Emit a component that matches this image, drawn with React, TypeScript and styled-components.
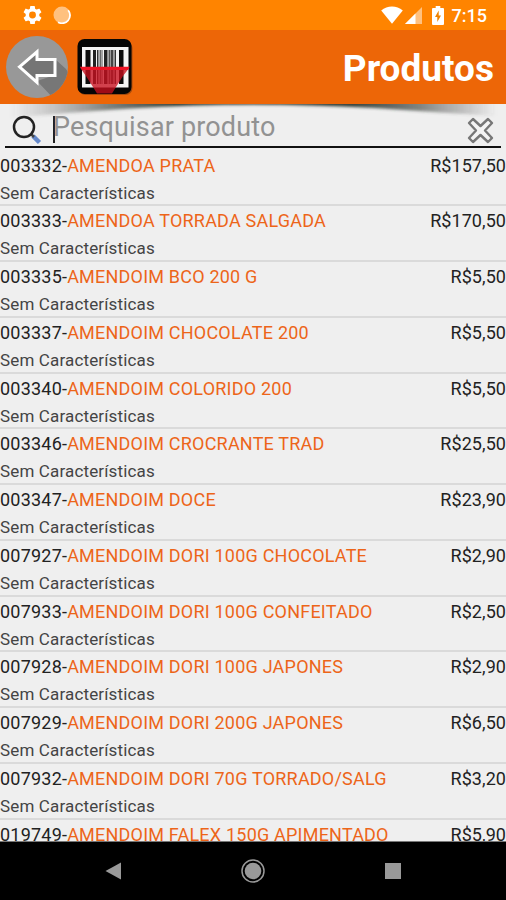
import React from "react";
import styled, { createGlobalStyle } from "styled-components";

const GlobalStyle = createGlobalStyle`
  * { box-sizing: border-box; }
  body { margin: 0; background: #000; }
`;

const Screen = styled.div`
  width: 506px;
  height: 900px;
  display: flex;
  flex-direction: column;
  overflow: hidden;
  background: #efefef;
  font-family: Roboto, "Liberation Sans", sans-serif;
`;

const StatusBar = styled.div`
  height: 30px;
  flex: none;
  display: flex;
  align-items: center;
  padding: 0 19px 0 23px;
  background: #ff8400;
  color: #fff;
`;

const StatusGroup = styled.div<{ $end?: boolean }>`
  display: flex;
  align-items: center;
  margin-left: ${(p) => (p.$end ? "auto" : "0")};
`;

const Clock = styled.span`
  font-size: 18px;
  font-weight: 500;
  line-height: 30px;
  padding-top: 2px;
  margin-left: 8px;
`;

const Header = styled.header`
  height: 74px;
  flex: none;
  display: flex;
  align-items: center;
  padding: 0 12px 0 6px;
  background: #ed6607;
`;

const IconButton = styled.button<{ $gap?: number }>`
  display: flex;
  padding: 0;
  border: 0;
  background: none;
  margin-left: ${(p) => p.$gap ?? 0}px;
`;

const Title = styled.h1`
  margin: 4px 0 0 auto;
  color: #fff;
  font-size: 37px;
  line-height: 42px;
  font-weight: 700;
`;

const SearchArea = styled.div`
  position: relative;
  height: 46.6px;
  flex: none;
  padding: 0 5px;
`;

const ShadowArt = styled.svg`
  position: absolute;
  left: 0;
  top: 0;
  display: block;
`;

const SearchBox = styled.div`
  position: relative;
  height: 44px;
  display: flex;
  align-items: center;
  padding: 10px 7px 0 7px;
  border-bottom: 2px solid #111;
`;

const Caret = styled.span`
  width: 2px;
  height: 27px;
  margin: 0 0 2px 11px;
  background: #222;
`;

const Placeholder = styled.span`
  flex: 1;
  margin-left: -2px;
  color: #929292;
  font-size: 27px;
  letter-spacing: 0.15px;
  line-height: 32px;
  padding-bottom: 6px;
  white-space: nowrap;
`;

const List = styled.ul`
  list-style: none;
  margin: 0;
  padding: 0;
  flex: none;
  height: 691.4px;
  overflow: hidden;
  border-bottom: 1px solid #777;
`;

const Item = styled.li`
  height: 55.77px;
  border-bottom: 2px solid #dadada;
`;

const ItemLine = styled.div`
  display: flex;
  justify-content: space-between;
  height: 30px;
  font-size: 18px;
  line-height: 30px;
  color: #222;
  white-space: nowrap;
`;

const Label = styled.span`
  letter-spacing: 0.21px;
`;

const Name = styled.span`
  color: #ed6519;
`;

const Price = styled.span`
  letter-spacing: 0.06px;
`;

const Details = styled.div`
  height: 23px;
  font-size: 17px;
  line-height: 25px;
  color: #444;
  letter-spacing: 0.15px;
`;

const NavBar = styled.nav`
  flex: 1;
  display: flex;
  align-items: center;
  justify-content: space-between;
  padding: 0 101px;
  background: #000;
`;

const products: [string, string, string][] = [
  ["003332", "AMENDOA PRATA", "157,50"],
  ["003333", "AMENDOA TORRADA SALGADA", "170,50"],
  ["003335", "AMENDOIM BCO 200 G", "5,50"],
  ["003337", "AMENDOIM CHOCOLATE 200", "5,50"],
  ["003340", "AMENDOIM COLORIDO 200", "5,50"],
  ["003346", "AMENDOIM CROCRANTE TRAD", "25,50"],
  ["003347", "AMENDOIM DOCE", "23,90"],
  ["007927", "AMENDOIM DORI 100G CHOCOLATE", "2,90"],
  ["007933", "AMENDOIM DORI 100G CONFEITADO", "2,50"],
  ["007928", "AMENDOIM DORI 100G JAPONES", "2,90"],
  ["007929", "AMENDOIM DORI 200G JAPONES", "6,50"],
  ["007932", "AMENDOIM DORI 70G TORRADO/SALG", "3,20"],
  ["019749", "AMENDOIM FALEX 150G APIMENTADO", "5,90"],
];

const GearIcon = () => (
  <svg width="19" height="20" viewBox="2 2 20 20" fill="#fff">
    <path d="M19.14 12.94c.04-.3.06-.61.06-.94s-.02-.64-.07-.94l2.03-1.58a.49.49 0 0 0 .12-.61l-1.92-3.32a.49.49 0 0 0-.59-.22l-2.39.96a7 7 0 0 0-1.62-.94L14.4 2.81a.48.48 0 0 0-.48-.41h-3.84a.47.47 0 0 0-.47.41l-.36 2.54c-.59.24-1.13.57-1.62.94l-2.39-.96a.48.48 0 0 0-.59.22L2.74 8.87a.47.47 0 0 0 .12.61l2.03 1.58a6 6 0 0 0 0 1.88l-2.03 1.58a.49.49 0 0 0-.12.61l1.92 3.32c.12.22.37.29.59.22l2.39-.96c.5.38 1.03.7 1.62.94l.36 2.54c.05.24.24.41.48.41h3.84c.24 0 .44-.17.47-.41l.36-2.54a7 7 0 0 0 1.62-.94l2.39.96c.22.08.47 0 .59-.22l1.92-3.32a.47.47 0 0 0-.12-.61zM12 15.6a3.6 3.6 0 1 1 0-7.2 3.6 3.6 0 0 1 0 7.2z" />
  </svg>
);

const SyncIcon = () => (
  <svg width="18" height="18" viewBox="0 0 18 18">
    <circle cx="9" cy="9" r="8.5" fill="#ffc17f" />
    <path d="M15.2 4.2A8 8 0 0 1 5 16.2" fill="none" stroke="#fff" strokeWidth="1.8" />
  </svg>
);

const WifiIcon = () => (
  <svg width="22" height="18" viewBox="0 0 22 18">
    <path d="M0.2 4.5C3.4 1.8 7 .5 11 .5s7.6 1.3 10.8 4L11 17.8z" fill="#fff" />
  </svg>
);

const SignalIcon = () => (
  <svg width="17" height="17" viewBox="0 0 17 17">
    <path d="M17 0v17H0z" fill="#ffc17f" />
    <path d="M10.5 6.5V17H0z" fill="#fff" />
  </svg>
);

const BatteryIcon = () => (
  <svg width="12" height="19" viewBox="0 0 12 19">
    <path d="M3.7 0h4.6v2H11q1 0 1 1v15q0 1-1 1H1q-1 0-1-1V3q0-1 1-1h2.7z" fill="#fff" />
    <path d="M6.7 4.5 3 11h2.3v5L9 9.5H6.7z" fill="#ee8200" />
  </svg>
);

const BackIcon = () => (
  <svg width="62" height="64" viewBox="0 0 62 64">
    <defs>
      <clipPath id="disc"><circle cx="31" cy="32" r="31" /></clipPath>
    </defs>
    <circle cx="31" cy="32" r="31" fill="#989898" />
    <path clipPath="url(#disc)" d="M31 46 50 66 70 50 60 34 49 24V40z" fill="#777" />
    <path d="M13.5 31.8 31 16.8V24.5H49V40.5H31V47.3z" fill="#757575" stroke="#fff" strokeWidth="3" />
  </svg>
);

const bars: [number, number, string][] = [
  [85.5, 5, "#0c0c0c"], [93, 3, "#222"], [97, 1.5, "#333"], [99.5, 1.5, "#666"], [101.5, 1, "#555"],
  [104, 3.5, "#222"], [108.5, 1.5, "#555"], [110.5, 3, "#444"], [114.5, 1.5, "#333"], [119, 4.5, "#0c0c0c"],
];

const BarcodeIcon = () => (
  <svg width="56" height="58" viewBox="77 38 56 58">
    <rect x="78.5" y="41" width="54" height="54" rx="7" fill="#6b3512" opacity=".55" />
    <rect x="77.5" y="39" width="54" height="55" rx="7" fill="#050505" />
    <rect x="82" y="47" width="46.5" height="40.5" fill="#f4f4f4" />
    {bars.map(([x, w, fill]) => <rect key={x} x={x} y="50" width={w} height="34" fill={fill} />)}
    <path d="M80 67.5H129.5L123 76 116 87 112 93.5H97L93 87 86 76z" fill="#c80e1d" opacity=".78" />
    <path d="M80 66.8H129.5L128 70H82z" fill="#ed1425" />
  </svg>
);

const HeaderShadow = () => (
  <ShadowArt width="506" height="22" viewBox="0 0 506 22">
    <defs>
      <linearGradient id="edge" x1="0" x2="1">
        <stop offset="0" stopColor="#444" stopOpacity="0" />
        <stop offset=".08" stopColor="#444" stopOpacity=".22" />
        <stop offset=".2" stopColor="#333a35" stopOpacity=".6" />
        <stop offset=".34" stopColor="#27342c" stopOpacity=".95" />
        <stop offset=".5" stopColor="#273027" />
        <stop offset=".7" stopColor="#27342c" stopOpacity=".95" />
        <stop offset=".84" stopColor="#333a35" stopOpacity=".6" />
        <stop offset=".94" stopColor="#444" stopOpacity=".25" />
        <stop offset="1" stopColor="#444" stopOpacity="0" />
      </linearGradient>
      <filter id="soft" x="-5%" y="-50%" width="110%" height="200%">
        <feGaussianBlur stdDeviation="2 1.5" />
      </filter>
    </defs>
    <path d="M10-5H496V12Q430 8 375 4 310 .5 253 .5T130 4.5Q76 8 10 14z" fill="url(#edge)" filter="url(#soft)" />
  </ShadowArt>
);

const SearchIcon = () => (
  <svg width="30" height="30" viewBox="0 0 30 30">
    <path d="m21 21 6.5 6.5" stroke="#6488ca" strokeWidth="4.5" />
    <path d="m19 19 3 3" stroke="#444" strokeWidth="2.5" />
    <circle cx="12" cy="12" r="10" fill="none" stroke="#222" strokeWidth="2.5" />
  </svg>
);

const ClearIcon = () => (
  <svg width="27" height="27" viewBox="0 0 27 27">
    <path d="M6 2 13.5 9 21 2 25 6 18 13.5 25 21 21 25 13.5 18 6 25 2 21 9 13.5 2 6z" fill="#f4f4f4" stroke="#777" strokeWidth="2.4" strokeLinejoin="round" />
  </svg>
);

const StatusSpacer = styled.span<{ $w: number }>`
  width: ${(p) => p.$w}px;
`;

export default function App() {
  return (
    <>
      <GlobalStyle />
      <Screen>
        <StatusBar>
          <StatusGroup>
            <GearIcon />
            <StatusSpacer $w={11} />
            <SyncIcon />
          </StatusGroup>
          <StatusGroup $end>
            <WifiIcon />
            <StatusSpacer $w={2} />
            <SignalIcon />
            <StatusSpacer $w={10} />
            <BatteryIcon />
            <Clock>7:15</Clock>
          </StatusGroup>
        </StatusBar>
        <Header>
          <IconButton aria-label="Voltar"><BackIcon /></IconButton>
          <IconButton aria-label="Código de barras" $gap={9}><BarcodeIcon /></IconButton>
          <Title>Produtos</Title>
        </Header>
        <SearchArea>
          <HeaderShadow />
          <SearchBox>
            <SearchIcon />
            <Caret />
            <Placeholder>Pesquisar produto</Placeholder>
            <ClearIcon />
          </SearchBox>
        </SearchArea>
        <List>
          {products.map(([code, name, price]) => (
            <Item key={code}>
              <ItemLine>
                <Label>{code}-<Name>{name}</Name></Label>
                <Price>R${price}</Price>
              </ItemLine>
              <Details>Sem Características</Details>
            </Item>
          ))}
        </List>
        <NavBar>
          <svg width="24" height="24" viewBox="0 0 24 24"><path d="M4.5 12 20 3.5v17z" fill="#999" /></svg>
          <svg width="26" height="26" viewBox="0 0 26 26">
            <circle cx="13" cy="13" r="11" fill="none" stroke="#999" strokeWidth="1.5" />
            <circle cx="13" cy="13" r="8.3" fill="#999" />
          </svg>
          <svg width="24" height="24" viewBox="0 0 24 24"><rect x="4" y="4" width="16" height="16" fill="#999" /></svg>
        </NavBar>
      </Screen>
    </>
  );
}
